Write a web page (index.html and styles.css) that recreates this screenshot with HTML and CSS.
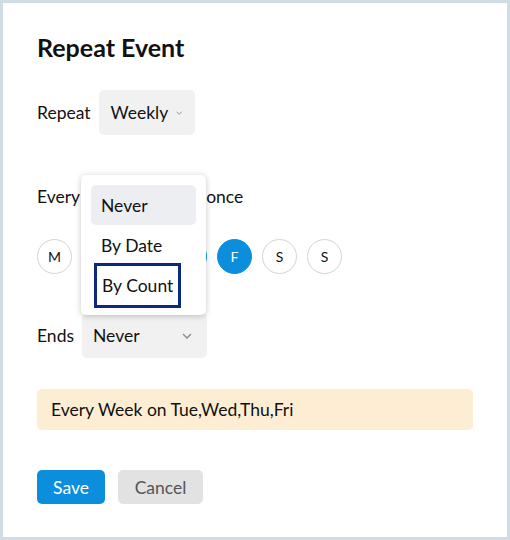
FILE: index.html
```html
<!DOCTYPE html>
<html>
<head>
<meta charset="utf-8">
<link rel="stylesheet" href="styles.css">
</head>
<body>
<div class="frame">
  <div class="dialog">
    <h1 class="title">Repeat Event</h1>
    <div class="row row-repeat">
      <span class="label">Repeat</span>
      <div class="select select-weekly">
        <span>Weekly</span>
        <svg class="chev" width="10" height="6" viewBox="0 0 10 6"><path d="M1 1 L5 5 L9 1" fill="none" stroke="#8a8a8a" stroke-width="1.4"/></svg>
      </div>
    </div>
    <div class="row row-every">
      <span class="label">Every</span>
      <div class="select select-count"></div>
      <span class="label">once</span>
    </div>
    <div class="days">
      <span class="day">M</span>
      <span class="day on">T</span>
      <span class="day on">W</span>
      <span class="day on">T</span>
      <span class="day on">F</span>
      <span class="day">S</span>
      <span class="day">S</span>
    </div>
    <div class="row row-ends">
      <span class="label">Ends</span>
      <div class="select select-ends">
        <span>Never</span>
        <svg class="chev" width="10" height="6" viewBox="0 0 10 6"><path d="M1 1 L5 5 L9 1" fill="none" stroke="#8a8a8a" stroke-width="1.4"/></svg>
        <div class="menu">
          <div class="item active">Never</div>
          <div class="item">By Date</div>
          <div class="item"><span class="focus">By Count</span></div>
        </div>
      </div>
    </div>
    <div class="summary">Every Week on Tue,Wed,Thu,Fri</div>
    <div class="actions">
      <button class="btn btn-save">Save</button>
      <button class="btn btn-cancel">Cancel</button>
    </div>
  </div>
</div>
</body>
</html>
```
FILE: styles.css
```css
* { box-sizing: border-box; }
html, body { margin: 0; padding: 0; }
body {
  font-family: Lato, "Open Sans", sans-serif;
  color: #111;
  background: #cfdce3;
}
.frame {
  width: 510px;
  height: 540px;
  border: 3px solid #cfdce3;
  background: #fff;
}
.dialog {
  padding: 30px 34px 0 34px;
}
.title {
  margin: 0;
  font-size: 25px;
  font-weight: 700;
  line-height: 28px;
  color: #111;
}
.row {
  display: flex;
  align-items: center;
  font-size: 17.5px;
}
.label { white-space: nowrap; }
.row-repeat { margin-top: 29px; gap: 8px; }
.select {
  position: relative;
  display: flex;
  align-items: center;
  background: #f1f1f1;
  border-radius: 5px;
  height: 45px;
  font-size: 17.5px;
}
.select-weekly {
  width: 96px;
  padding: 0 12px;
  gap: 8px;
}
.row-every { margin-top: 44px; gap: 8px; }
.select-count {
  width: 110px;
  height: 34px;
  background: #fff;
}
.days {
  display: flex;
  gap: 10px;
  margin-top: 26px;
}
.day {
  width: 35px;
  height: 35px;
  border-radius: 50%;
  border: 1px solid #d4d4d4;
  display: flex;
  align-items: center;
  justify-content: center;
  font-size: 14px;
  color: #111;
}
.day.on {
  background: #0b8fdd;
  border-color: #0b8fdd;
  color: #fff;
}
.row-ends { margin-top: 39px; gap: 8px; }
.select-ends {
  width: 125px;
  padding: 0 11px;
  justify-content: space-between;
}
.select-ends .chev { margin-right: 4px; }
.menu {
  position: absolute;
  left: -1px;
  bottom: 43px;
  width: 125px;
  padding: 10px;
  background: #fff;
  border-radius: 5px;
  box-shadow: 0 1px 6px rgba(0,0,0,0.22);
  z-index: 2;
}
.item {
  height: 40px;
  display: flex;
  align-items: center;
  padding: 0 10px;
  border-radius: 5px;
  font-size: 17.5px;
  color: #111;
}
.item.active { background: #eceef1; }
.item:last-child { padding: 0 3px; }
.focus {
  display: flex;
  align-items: center;
  height: 45px;
  padding: 0 5px;
  border: 3px solid #0c2a7c;
}
.summary {
  margin-top: 31px;
  height: 41px;
  display: flex;
  align-items: center;
  padding: 0 14px;
  background: #fdeed3;
  border-radius: 5px;
  font-size: 17.5px;
}
.actions {
  display: flex;
  gap: 13px;
  margin-top: 40px;
}
.btn {
  font-family: Lato, "Open Sans", sans-serif;
  font-size: 17.5px;
  height: 34px;
  border: none;
  border-radius: 5px;
  padding: 0;
}
.btn-save {
  width: 68px;
  background: #0b8fdd;
  color: #fff;
}
.btn-cancel {
  width: 85px;
  background: #e2e2e2;
  color: #555;
}
```
